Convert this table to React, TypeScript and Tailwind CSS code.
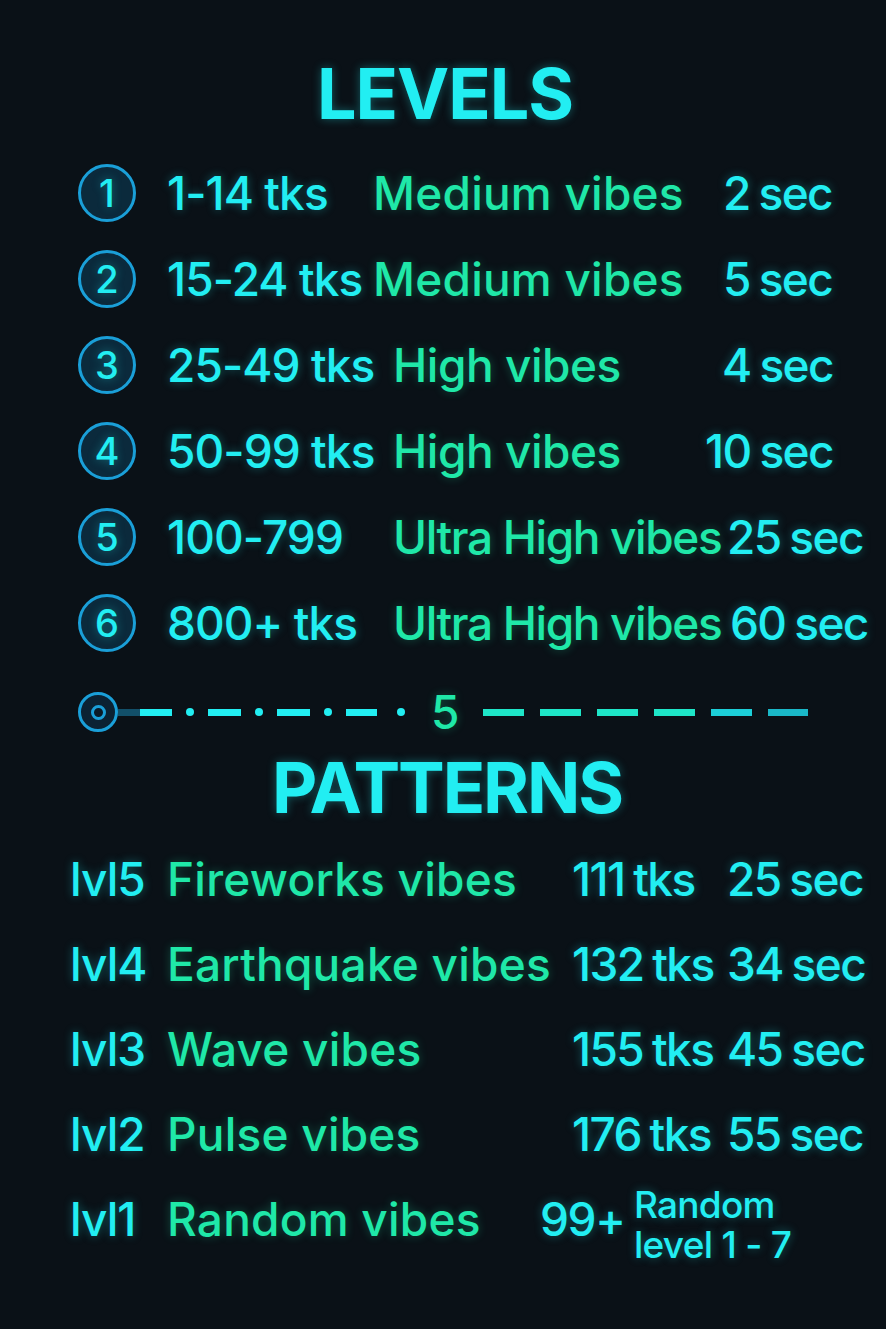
const CYAN = "text-[#22eef2] [text-shadow:0_0_10px_rgba(34,238,242,0.35)]";
const GREEN = "text-[#1fe8a8] [text-shadow:0_0_10px_rgba(31,232,168,0.3)]";
const NUM = "tracking-[-0.035em] [word-spacing:-0.04em]";

type LevelRow = {
  n: string;
  range: string;
  vibes: string;
  sec: string;
  rangeW: string;
  vibesW: string;
  vibesT: string;
};

const levels: LevelRow[] = [
  { n: "1", range: "1-14 tks", vibes: "Medium vibes", sec: "2 sec", rangeW: "w-[206px]", vibesW: "w-[350px]", vibesT: "tracking-[0.005em]" },
  { n: "2", range: "15-24 tks", vibes: "Medium vibes", sec: "5 sec", rangeW: "w-[206px]", vibesW: "w-[350px]", vibesT: "tracking-[0.005em]" },
  { n: "3", range: "25-49 tks", vibes: "High vibes", sec: "4 sec", rangeW: "w-[226px]", vibesW: "w-[329px]", vibesT: "tracking-[-0.01em]" },
  { n: "4", range: "50-99 tks", vibes: "High vibes", sec: "10 sec", rangeW: "w-[226px]", vibesW: "w-[312px]", vibesT: "tracking-[-0.01em]" },
  { n: "5", range: "100-799", vibes: "Ultra High vibes", sec: "25 sec", rangeW: "w-[226px]", vibesW: "w-[334px]", vibesT: "tracking-[-0.03em]" },
  { n: "6", range: "800+ tks", vibes: "Ultra High vibes", sec: "60 sec", rangeW: "w-[226px]", vibesW: "w-[337px]", vibesT: "tracking-[-0.03em]" },
];

const patterns = [
  { lvl: "lvl5", name: "Fireworks vibes", tks: "111 tks", sec: "25 sec" },
  { lvl: "lvl4", name: "Earthquake vibes", tks: "132 tks", sec: "34 sec" },
  { lvl: "lvl3", name: "Wave vibes", tks: "155 tks", sec: "45 sec" },
  { lvl: "lvl2", name: "Pulse vibes", tks: "176 tks", sec: "55 sec" },
];

function Divider() {
  return (
    <div className="flex items-center h-[40px] mt-[26px] pl-[78px]">
      <div className="w-[40px] h-[40px] rounded-full border-[3px] border-[#1a9fd8] bg-[#0b2233] flex items-center justify-center shrink-0">
        <div className="w-[15px] h-[15px] rounded-full border-[3px] border-[#1a9fd8] bg-[#0b1a26]" />
      </div>
      <div className="w-[22px] h-[7px] bg-[#12506a]" />
      <div className="w-[32px] h-[7px] bg-[#22eef2]" />
      <div className="w-[8px] h-[8px] rounded-full bg-[#22eef2] ml-[14px]" />
      <div className="w-[33px] h-[7px] bg-[#22eef2] ml-[14px]" />
      <div className="w-[8px] h-[8px] rounded-full bg-[#22eef2] ml-[14px]" />
      <div className="w-[33px] h-[7px] bg-[#22eef2] ml-[14px]" />
      <div className="w-[8px] h-[8px] rounded-full bg-[#22eef2] ml-[14px]" />
      <div className="w-[31px] h-[7px] bg-[#22eef2] ml-[14px]" />
      <div className="w-[8px] h-[8px] rounded-full bg-[#22eef2] ml-[20px]" />
      <span className={`ml-[26px] text-[46px] leading-none font-medium ${GREEN}`}>5</span>
      <div className="flex gap-[16px] ml-[24px]">
        <div className="w-[41px] h-[7px] bg-[#1ee6c8]" />
        <div className="w-[41px] h-[7px] bg-[#1ee6c8]" />
        <div className="w-[41px] h-[7px] bg-[#1ee6c8]" />
        <div className="w-[41px] h-[7px] bg-[#1ee6c8]" />
        <div className="w-[41px] h-[7px] bg-[#1ccfd8]" />
        <div className="w-[40px] h-[7px] bg-[#1ab8c8]" />
      </div>
    </div>
  );
}

export default function App() {
  return (
    <div className="w-[886px] h-[1329px] bg-[#0a1117] overflow-hidden font-['Inter',sans-serif]">
      <h1 className={`pt-[59px] text-center text-[70px] leading-none font-bold tracking-[-0.015em] pl-[4px] ${CYAN}`}>
        LEVELS
      </h1>

      <div className="mt-[21px]">
        {levels.map((r) => (
          <div key={r.n} className="flex items-center h-[86px] pl-[78px] text-[46px] leading-none font-medium whitespace-nowrap">
            <div className="w-[58px] h-[58px] rounded-full border-[3px] border-[#1a9fd8] bg-[#0b2a3c] flex items-center justify-center shrink-0 mr-[31px]">
              <span className={`text-[38px] leading-none ${CYAN}`}>{r.n}</span>
            </div>
            <span className={`${r.rangeW} shrink-0 tracking-[-0.02em] ${CYAN}`}>{r.range}</span>
            <span className={`${r.vibesW} shrink-0 ${r.vibesT} ${GREEN}`}>{r.vibes}</span>
            <span className={`${NUM} ${CYAN}`}>{r.sec}</span>
          </div>
        ))}
      </div>

      <Divider />

      <h2 className={`mt-[21px] text-center text-[70px] leading-none font-bold tracking-[-0.03em] pl-[8px] ${CYAN}`}>
        PATTERNS
      </h2>

      <div className="mt-[13px]">
        {patterns.map((p) => (
          <div key={p.lvl} className="flex items-center h-[85px] pl-[70px] text-[46px] leading-none font-medium whitespace-nowrap">
            <span className={`w-[97px] shrink-0 tracking-[-0.02em] ${CYAN}`}>{p.lvl}</span>
            <span className={`w-[405px] shrink-0 tracking-[0.005em] ${GREEN}`}>{p.name}</span>
            <span className={`w-[155px] shrink-0 ${NUM} ${CYAN}`}>{p.tks}</span>
            <span className={`${NUM} ${CYAN}`}>{p.sec}</span>
          </div>
        ))}
        <div className="flex items-center h-[85px] pl-[70px] text-[46px] leading-none font-medium whitespace-nowrap">
          <span className={`w-[97px] shrink-0 tracking-[-0.02em] ${CYAN}`}>lvl1</span>
          <span className={`w-[373px] shrink-0 tracking-[0.005em] ${GREEN}`}>Random vibes</span>
          <span className={`w-[94px] shrink-0 tracking-[-0.03em] ${CYAN}`}>99+</span>
          <span className={`flex flex-col text-[37px] leading-[40px] mt-[12px] tracking-[-0.02em] ${CYAN}`}>
            <span>Random</span>
            <span>level 1 - 7</span>
          </span>
        </div>
      </div>
    </div>
  );
}
